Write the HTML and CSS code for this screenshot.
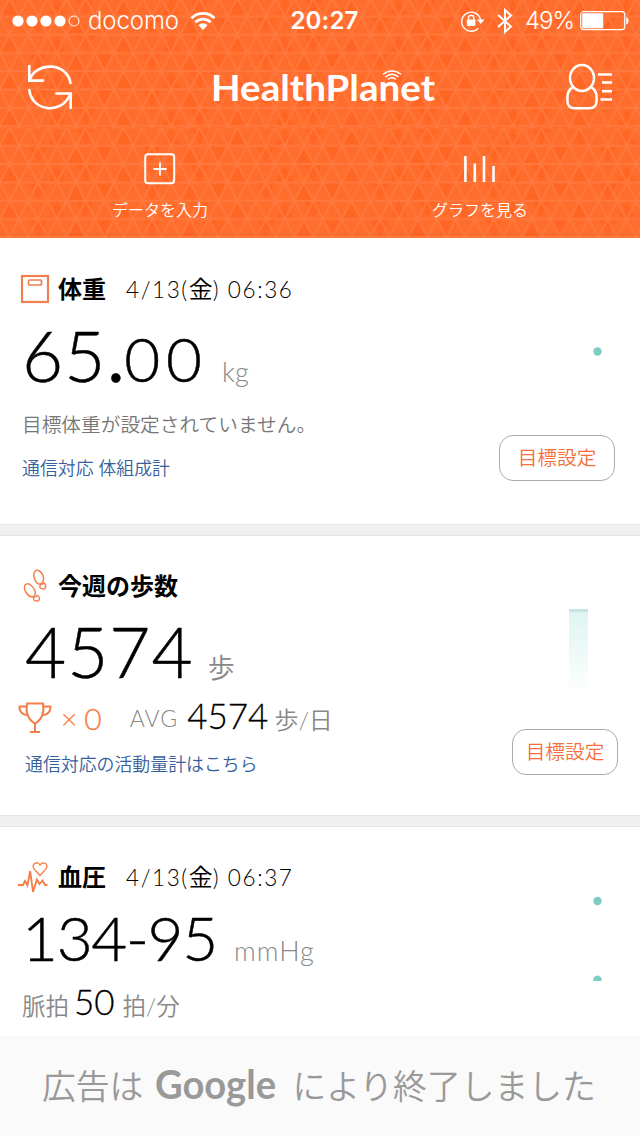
FILE: index.html
```html
<!DOCTYPE html>
<html lang="ja">

<head>
    <meta charset="UTF-8">
    <meta name="viewport" content="width=device-width, initial-scale=1.0">
    <title>HealthPlanet</title>
    <link rel="stylesheet" href="styles.css">
</head>

<body>
    <header>
        <svg class="pattern" width="640" height="238">
            <defs>
                <pattern id="tri" width="126.6" height="36.6" patternUnits="userSpaceOnUse" patternTransform="translate(0 -2) scale(.9 1)">
                    <path class="dark" d="M10.5 0L21.1 18.3H0zM63.3 0L73.9 18.3H52.7zM95 18.3L84.4 0H105.5zM31.7 18.3H52.8L42.2 36.6zM73.9 36.6L84.4 18.3L95 36.6zM105.5 18.3H126.6L116 36.6z" />
                    <path class="mesh" d="M0 0H126.6M0 18.3H126.6M0 36.6H126.6M-10.5 0L10.6 36.6M10.6 0L31.7 36.6M31.7 0L52.8 36.6M52.8 0L73.9 36.6M73.9 0L95 36.6M95 0L116.1 36.6M116.1 0L137.2 36.6M10.6 0L-10.5 36.6M31.7 0L10.6 36.6M52.8 0L31.7 36.6M73.9 0L52.8 36.6M95 0L73.9 36.6M116.1 0L95 36.6M137.2 0L116.1 36.6" />
                </pattern>
                <pattern id="tri-nav" href="#tri" patternTransform="translate(0 127.5) scale(.9 1)" />
            </defs>
            <rect width="640" height="128" fill="url(#tri)" />
            <rect y="128" width="640" height="110" fill="url(#tri-nav)" />
        </svg>

        <div class="status">
            <div class="carrier">
                <svg width="70" height="20" viewBox="0 0 70 20">
                    <g fill="#fff">
                        <circle cx="6" cy="10" r="5.6" />
                        <circle cx="20" cy="10" r="5.6" />
                        <circle cx="34" cy="10" r="5.6" />
                        <circle cx="48" cy="10" r="5.6" />
                    </g>
                    <circle cx="62" cy="10" r="5" fill="none" stroke="#fff" />
                </svg>
                <span>docomo</span>
                <svg width="26" height="20" viewBox="0 0 26 20">
                    <g fill="none" stroke="#fff" stroke-width="2.8">
                        <path d="M1.5 7.2a16.3 16.3 0 0 1 23 0" />
                        <path d="M5.4 11.3a10.7 10.7 0 0 1 15.2 0" />
                    </g>
                    <path d="M8.4 14.2a6.5 6.5 0 0 1 9.2 0L13 19z" fill="#fff" />
                </svg>
            </div>
            <div class="time">20:27</div>
            <div class="battery">
                <svg width="24" height="22" viewBox="0 0 24 22">
                    <path d="M17.2 18.2A9.5 9.5 0 1 1 19.6 10" fill="none" stroke="#fff" stroke-width="1.4" />
                    <path d="M16 9.5h7.5L19.8 14z" fill="#fff" />
                    <rect x="5.8" y="9.4" width="8.6" height="6.5" rx=".8" fill="#fff" />
                    <path d="M7.5 10V7.8a2.6 2.6 0 0 1 5.2 0V10" fill="none" stroke="#fff" stroke-width="1.4" />
                </svg>
                <svg class="bt" width="16" height="26" viewBox="0 0 16 26">
                    <path d="M1 7L14 18.5L8 24V2L14 7.5L1 19" fill="none" stroke="#fff" stroke-width="2" />
                </svg>
                <span>49%</span>
                <svg width="50" height="20" viewBox="0 0 50 20">
                    <rect x=".7" y=".7" width="44" height="18" rx="3" fill="none" stroke="#fff" stroke-width="1.2" />
                    <rect x="2.2" y="2.2" width="21" height="15" rx="1" fill="#fff" />
                    <path d="M46.2 6.2c3 .5 3 6.6 0 7.2z" fill="#fff" />
                </svg>
            </div>
        </div>

        <div class="bar">
            <svg width="46" height="46" viewBox="0 0 46 46">
                <g fill="none" stroke="#fff" stroke-width="2.6" stroke-linecap="round">
                    <path d="M2.3 2V16.6H16" />
                    <path d="M2.8 15.5C9 -2 40 -2.5 43.5 19" />
                    <path d="M29.5 29.5H43.7V44" />
                    <path d="M2.3 26C5 47.5 34 51 43 31" />
                </g>
            </svg>
            <svg class="logo" width="226" height="48" viewBox="0 0 226 48">
                <text x="0" y="38" textLength="224" lengthAdjust="spacingAndGlyphs">HealthPlanet</text>
                <g fill="none" stroke="#fff" stroke-width="1.5">
                    <path d="M172 11.5a13 13 0 0 1 18 0" />
                    <path d="M174.5 14a9 9 0 0 1 13 0" />
                    <path d="M177 16.5a5.5 5.5 0 0 1 8 0" />
                </g>
            </svg>
            <svg width="48" height="46" viewBox="0 0 48 46">
                <g fill="none" stroke="#fff" stroke-width="2.5">
                    <ellipse cx="16" cy="14" rx="12" ry="13" />
                    <path d="M7 23C0 27 1.5 34 1.5 38Q2 44.3 9 44.3H23Q30 44.3 30.5 38C30.5 34 32 27 25 23" />
                    <path d="M32 10.5H46M36 18.5H46M36 27.2H46M34.5 35.5H46" />
                </g>
            </svg>
        </div>

        <nav>
            <a class="tab">
                <svg width="32" height="32" viewBox="0 0 32 32">
                    <rect x="1.2" y="1.2" width="29" height="29" rx="3" fill="none" stroke="#fff" stroke-width="2" />
                    <path d="M16 9.5V22.5M9.5 16H22.5" stroke="#fff" stroke-width="1.8" />
                </svg>
                <span>データを入力</span>
            </a>
            <a class="tab">
                <svg width="32" height="32" viewBox="0 0 32 32">
                    <path d="M1.4 3V29M10.8 10.5V29M20 3V29M29.5 13V29" stroke="#fff" stroke-width="2.6" />
                </svg>
                <span>グラフを見る</span>
            </a>
        </nav>
    </header>

    <main>
        <section class="card weight">
            <div class="title">
                <svg width="32" height="32" viewBox="0 0 32 32">
                    <g fill="none" stroke="#f07f4f" stroke-width="2.2">
                        <rect x="4" y="3" width="26" height="26" />
                        <rect x="10.5" y="7" width="13" height="5" rx="1" stroke-width="1.7" />
                    </g>
                </svg>
                <h2>体重</h2>
                <time>4/13(<b>金</b>) 06:36</time>
            </div>
            <div class="value"><span class="big">65<i>.</i></span><span class="dec">00</span><span class="unit">kg</span></div>
            <p class="note">目標体重が設定されていません。</p>
            <a class="link">通信対応 体組成計</a>
            <svg class="chart" width="10" height="10"><circle cx="5.5" cy="5.5" r="4.2" fill="#7fccc5" /></svg>
            <button>目標設定</button>
        </section>

        <section class="card steps">
            <div class="title">
                <svg width="32" height="36" viewBox="0 0 32 36">
                    <g fill="none" stroke="#f58150" stroke-width="1.5">
                        <path d="M23.5 15.5C18 18.5 14.500 8 16.5 4C19.5 -.5 25 5 25.5 10C25.7 13 25 14.5 23.5 15.5z" />
                        <path d="M22.5 16.5L26.5 15.2C29 18 27.5 21 25 21C22.5 21 21 19.5 22.5 16.5z" />
                        <path d="M15.5 28.5C10 30.5 5 21 7 17C10 13.5 15.5 18.5 17 23C17.7 25.5 17.2 27.5 15.5 28.5z" />
                        <path d="M15.5 29.5L19.5 27.5C22.5 29.5 22 32.5 19.5 33C17 33.3 14.8 32.5 15.5 29.5z" />
                    </g>
                </svg>
                <h2>今週の歩数</h2>
            </div>
            <div class="value"><span class="big">4574</span><span class="unit">歩</span></div>
            <div class="avg">
                <svg width="34" height="32" viewBox="0 0 34 32">
                    <g fill="none" stroke="#f57f48" stroke-width="2">
                        <path d="M9 1.5H25C26.5 10 24 18 17 21.5C10 18 7.5 10 9 1.5z" />
                        <path d="M8.5 4.5H1.5C1 9 4 13 9.5 13M25.5 4.5H32.5C33 9 30 13 24.5 13" />
                        <path d="M17 21.5V29.5M12 30H22" />
                    </g>
                </svg>
                <span class="cup">×<i>0</i></span>
                <span class="label">AVG</span>
                <span class="mid">4574</span>
                <span class="per">歩/日</span>
            </div>
            <a class="link">通信対応の活動量計はこちら</a>
            <div class="chart column"></div>
            <button>目標設定</button>
        </section>

        <section class="card pressure">
            <div class="title">
                <svg width="32" height="32" viewBox="0 0 32 32">
                    <g fill="none" stroke="#f57a45">
                        <path d="M0 24H5L7 20L9.5 24.5L12.2 10L15 31L19 18.5L21.5 23L24.5 19.5L27 24H29.5" stroke-width="1.8" />
                        <path d="M22 14.5L15.8 7.6C13.5 3 19 -.5 22 4C25.5 -.5 30.5 3 28.2 7.6z" stroke-width="1.3" />
                    </g>
                </svg>
                <h2>血圧</h2>
                <time>4/13(<b>金</b>) 06:37</time>
            </div>
            <div class="value"><span class="dec">134-95</span><span class="unit">mmHg</span></div>
            <div class="pulse"><span>脈拍</span><span class="mid">50</span><span>拍/分</span></div>
            <svg class="chart" width="10" height="86">
                <circle cx="5.5" cy="5" r="4.2" fill="#7fccc5" />
                <path d="M1.5 85a4.2 4.2 0 1 1 8 0z" fill="#7fccc5" />
            </svg>
        </section>
    </main>

    <footer>
        <span>広告は</span>
        <svg width="124" height="72" viewBox="0 0 124 72">
            <text x="0" y="51" textLength="121" lengthAdjust="spacingAndGlyphs">Google</text>
        </svg>
        <span>により終了しました</span>
    </footer>
</body>

</html>
```

FILE: styles.css
```css
* {
    margin: 0;
    padding: 0;
    box-sizing: border-box;
}

body {
    width: 640px;
    height: 1136px;
    overflow: hidden;
    display: flex;
    flex-direction: column;
    font-family: Lato, "Noto Sans CJK JP", sans-serif;
    font-weight: 350;
    color: #000;
    background: #fff;
}

svg {
    display: block;
    flex: none;
    overflow: visible;
}

header {
    height: 238px;
    flex: none;
    position: relative;
    color: #fff;
    background: #ff6d2d;
}

.pattern {
    position: absolute;
    left: 0;
    top: 0;
}

.pattern .dark {
    fill: #ff6624;
}

.pattern .mesh {
    fill: none;
    stroke: #ff783d;
    stroke-width: 2;
}

.status,
.bar,
nav {
    position: relative;
    display: flex;
}

.status {
    height: 40px;
    padding: 1px 10px 0 12px;
    align-items: center;
    justify-content: space-between;
    font-family: Inter, sans-serif;
    font-size: 24px;
    font-weight: 400;
}

.carrier,
.battery {
    display: flex;
    align-items: center;
}

.carrier {
    width: 272px;
}

.carrier span {
    margin: 0 11px 0 6px;
    font-weight: 300;
    letter-spacing: -.1px;
}

.time {
    margin-left: 5px;
    font-weight: 600;
    letter-spacing: .2px;
}

.battery {
    width: 270px;
    justify-content: flex-end;
}

.battery .bt {
    margin: 0 12px;
}

.battery span {
    margin-right: 6px;
    font-weight: 300;
    letter-spacing: -1px;
}

.bar {
    height: 88px;
    padding: 5px 26px 0 27px;
    align-items: center;
    justify-content: space-between;
}

.logo {
    margin-left: 9px;
}

.logo text {
    font-size: 37px;
    font-weight: 700;
    fill: #fff;
}

nav {
    height: 110px;
}

.tab {
    flex: 1;
    display: flex;
    flex-direction: column;
    align-items: center;
    padding-top: 25px;
    font-size: 16px;
    line-height: 24px;
}

.tab span {
    margin-top: 13px;
}

main {
    flex: 1;
}

.card {
    position: relative;
    border-bottom: 10px solid #f0f0f0;
    box-shadow: inset 0 1px #e4e4e4, inset 0 -1px #e4e4e4;
}

.weight {
    height: 297px;
    padding: 33px 22px 0;
    box-shadow: inset 0 -1px #e4e4e4;
}

.steps {
    height: 291px;
    padding: 33px 22px 0;
}

.pressure {
    height: 210px;
    padding: 33px 22px 0;
    border: none;
    box-shadow: inset 0 1px #e4e4e4;
}

.title {
    display: flex;
    align-items: center;
    height: 36px;
    margin-left: -4px;
}

.title h2 {
    margin-left: 8px;
    font-size: 24px;
    line-height: 36px;
    font-weight: 700;
}

.title time {
    margin-left: 20px;
    font-size: 22.5px;
    line-height: 36px;
    letter-spacing: 1.6px;
}

.title time b {
    font-size: 24px;
    font-weight: 350;
    letter-spacing: 0;
}

.value {
    display: flex;
    align-items: baseline;
}

.weight .value {
    height: 86px;
    line-height: 95px;
}

.steps .value {
    height: 92px;
    padding-left: 3px;
    line-height: 93px;
}

.pressure .value {
    height: 86px;
    line-height: 85px;
}

.big,
.dec {
    -webkit-text-stroke: .5px #000;
}

.big {
    font-size: 71px;
    letter-spacing: 1px;
}

.big i {
    margin-left: 1px;
    font-style: normal;
    font-weight: 400;
    letter-spacing: 0;
}

.dec {
    font-size: 62px;
    letter-spacing: 6px;
}

.unit {
    margin-left: 14px;
    font-size: 27px;
    color: #888;
}

.note {
    margin-top: 17px;
    font-size: 19.7px;
    line-height: 30px;
    color: #777;
}

.link {
    display: block;
    font-size: 17.9px;
    line-height: 28px;
    color: #35609c;
}

.weight .link {
    margin-top: 14px;
}

.steps .link {
    margin: 10px 0 0 3px;
}

button {
    position: absolute;
    height: 46px;
    border: 1px solid #aaa;
    border-radius: 14px;
    background: #fff;
    color: #f5703c;
    font: 350 19.7px/44px Lato, "Noto Sans CJK JP", sans-serif;
}

.weight button {
    right: 25px;
    top: 197px;
    width: 116px;
}

.steps button {
    right: 22px;
    top: 194px;
    width: 106px;
}

.chart {
    position: absolute;
    left: 592px;
}

.weight .chart {
    top: 108px;
}

.pressure .chart {
    top: 70px;
}

.steps .column {
    left: 569px;
    top: 74px;
    width: 19px;
    height: 80px;
    border-top: 3px solid #c4e5e1;
    background: linear-gradient(#dff4f2, #fbfffe);
}

.avg {
    display: flex;
    align-items: center;
    height: 44px;
    margin-left: -4px;
    color: #888;
}

.cup {
    display: flex;
    align-items: center;
    margin-left: 9px;
    font-size: 28px;
    color: #f57f48;
    -webkit-text-stroke: .3px #f57f48;
}

.cup i {
    margin-left: 7px;
    font-style: normal;
    font-size: 30px;
}

.label {
    margin-left: 28px;
    font-size: 23px;
    letter-spacing: 1px;
}

.mid {
    font-size: 35px;
    color: #000;
    -webkit-text-stroke: .3px #000;
}

.avg .mid {
    margin: 0 6px 6px 9px;
}

.per {
    font-size: 24px;
}

.pressure .dec {
    letter-spacing: -1.3px;
}

.pressure .unit {
    margin-left: 17px;
    letter-spacing: 1px;
}

.pulse {
    display: flex;
    align-items: baseline;
    height: 40px;
    line-height: 40px;
    font-size: 23.5px;
    color: #888;
}

.pulse .mid {
    margin: 0 8px 0 5px;
}

footer {
    height: 100px;
    flex: none;
    display: flex;
    align-items: center;
    padding: 0 0 4px 42px;
    background: #fafafa;
    color: #999;
    font-size: 33.8px;
}

footer svg {
    margin: 0 13px 0 12px;
}

footer text {
    font-size: 41px;
    font-weight: 700;
    fill: #999;
}
```
